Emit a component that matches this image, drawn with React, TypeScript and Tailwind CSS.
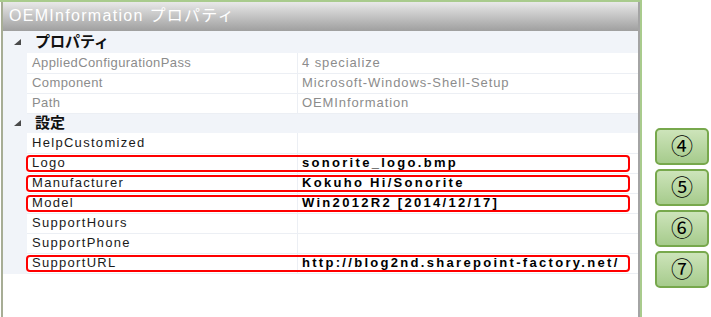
import React from "react"

const font = { fontFamily: '"Liberation Sans", "Noto Sans CJK JP", sans-serif' }

type Prop = { name: string; value: string; readOnly?: boolean; marked?: boolean }

const groups: { title: string; props: Prop[] }[] = [
  {
    title: "プロパティ",
    props: [
      { name: "AppliedConfigurationPass", value: "4 specialize", readOnly: true },
      { name: "Component", value: "Microsoft-Windows-Shell-Setup", readOnly: true },
      { name: "Path", value: "OEMInformation", readOnly: true },
    ],
  },
  {
    title: "設定",
    props: [
      { name: "HelpCustomized", value: "" },
      { name: "Logo", value: "sonorite_logo.bmp", marked: true },
      { name: "Manufacturer", value: "Kokuho Hi/Sonorite", marked: true },
      { name: "Model", value: "Win2012R2 [2014/12/17]", marked: true },
      { name: "SupportHours", value: "" },
      { name: "SupportPhone", value: "" },
      { name: "SupportURL", value: "http://blog2nd.sharepoint-factory.net/", marked: true },
    ],
  },
]

function Expander() {
  return (
    <svg width="7" height="6" viewBox="0 0 7 6" className="shrink-0">
      <polygon points="7,0 7,6 0,6" fill="#4b4b4b" />
    </svg>
  )
}

function CategoryRow({ title, first }: { title: string; first?: boolean }) {
  return (
    <div
      className={
        "flex items-center bg-[#f1f4f9] " + (first ? "h-[22px]" : "h-[20px]")
      }
    >
      <div className="flex w-[24px] justify-center pl-[4px]">
        <Expander />
      </div>
      <span className="pl-[8px] text-[15px] font-bold text-[#111]">{title}</span>
    </div>
  )
}

function PropRow({ p }: { p: Prop }) {
  return (
    <div className="relative grid h-[20px] grid-cols-[24px_271px_340px]">
      <div className="bg-[#f1f4f9]" />
      <div
        className={
          "flex items-center border-r border-b border-[#eceff4] pl-[5px] text-[13px] " +
          (p.readOnly ? "tracking-[0.4px] text-[#8c8c8c]" : "tracking-[1.3px] text-[#1a1a1a]")
        }
      >
        {p.name}
      </div>
      <div
        className={
          "flex items-center border-b border-[#eceff4] pl-[4px] text-[13px] " +
          (p.readOnly ? "tracking-[0.9px] text-[#8c8c8c]" : "tracking-[2.3px] font-bold text-black")
        }
      >
        {p.value}
      </div>
      {p.marked ? (
        <div className="pointer-events-none absolute top-[2px] bottom-[1px] left-[23px] w-[604px] rounded-[4px] border-2 border-[#ff0000]" />
      ) : null}
    </div>
  )
}

function Step({ label }: { label: string }) {
  return (
    <div className="flex h-[37px] w-[54px] items-center justify-center rounded-[5px] border-2 border-[#77a84c] bg-gradient-to-b from-[#cde4ba] to-[#a6cb8c] text-[22px] leading-none text-black">
      {label}
    </div>
  )
}

export default function App() {
  return (
    <div className="flex h-[317px] w-[711px] bg-white" style={font}>
      <div className="h-full w-[642px] border-t-2 border-r-2 border-[#a9cb8d]">
        <div className="ml-[1px] flex h-full flex-col border-l-2 border-r-2 border-l-[#a7ad95] border-r-[#a4a4a4]">
          <div className="flex h-[29px] items-center bg-gradient-to-b from-[#e9e9e9] to-[#9f9f9f] pb-[1px] pl-[6px] text-[16px] tracking-[1.3px] text-white">
            OEMInformation プロパティ
          </div>
          {groups.map((g, gi) => (
            <div key={g.title}>
              <CategoryRow title={g.title} first={gi === 0} />
              {g.props.map((p) => (
                <PropRow key={p.name} p={p} />
              ))}
            </div>
          ))}
        </div>
      </div>
      <div className="flex flex-col gap-[4px] pt-[128px] pl-[13px]">
        <Step label="④" />
        <Step label="⑤" />
        <Step label="⑥" />
        <Step label="⑦" />
      </div>
    </div>
  )
}
